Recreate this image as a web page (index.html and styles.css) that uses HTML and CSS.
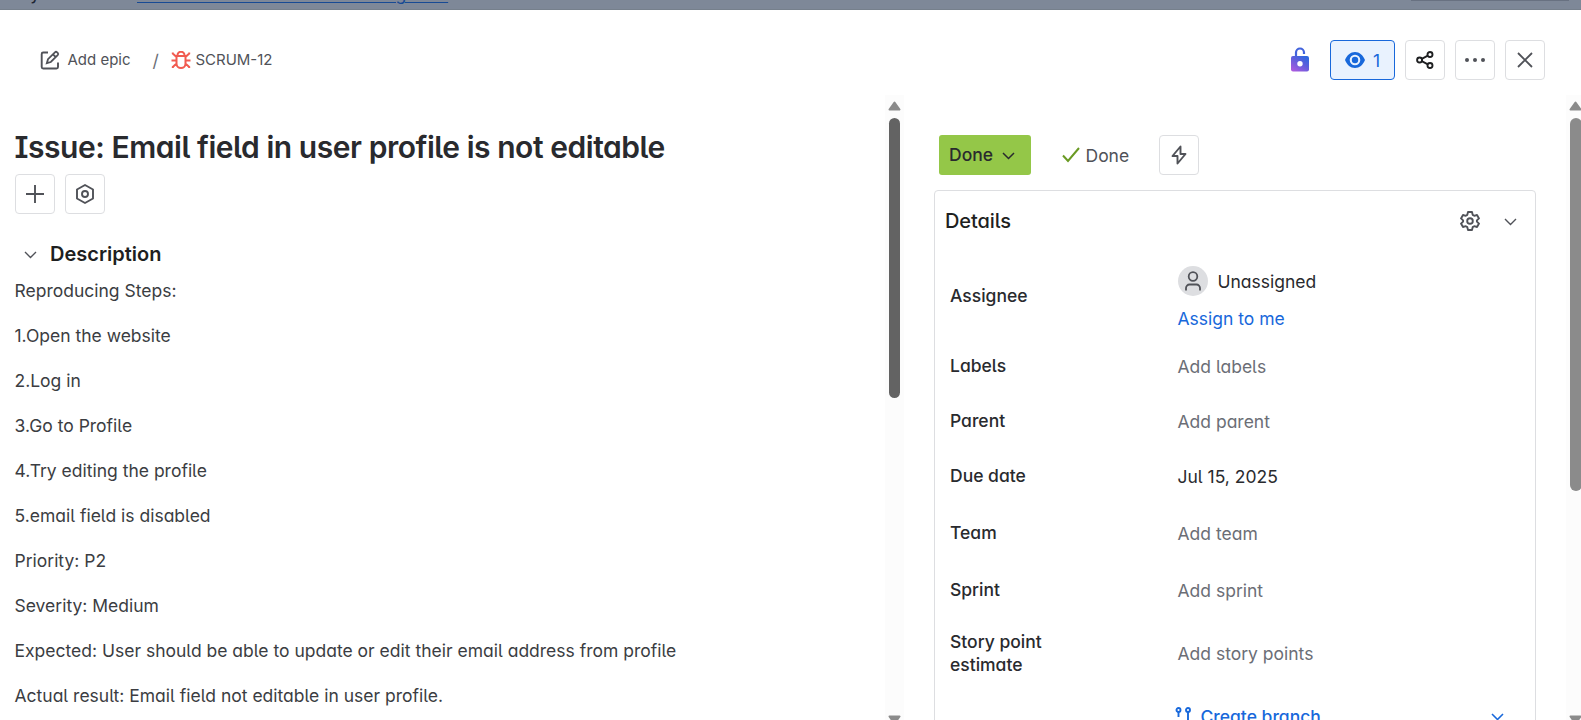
FILE: index.html
```html
<!DOCTYPE html>
<html lang="en">
<head>
<meta charset="utf-8">
<title>SCRUM-12</title>
<link rel="stylesheet" href="styles.css">
</head>
<body>
<div class="backdrop"><span class="behind-text">If you can't see</span><span class="behind-link">switch to the classic issue navigation</span><span class="behind-box"></span></div>
<header class="top">
  <nav class="crumbs">
    <svg class="i-edit" width="20" height="20" viewBox="0 0 20 20" fill="none" stroke="#505258" stroke-width="1.9"><path d="M8 2.500H3.200A1.500 1.500 0 0 0 1.700 4V17A1.500 1.500 0 0 0 3.200 18.500H16.500A1.500 1.500 0 0 0 18 17V12.500"/><path d="M6.800 13.200L8 9.200L14.900 2.300A1.600 1.600 0 0 1 17.100 2.300L17.700 2.900A1.600 1.600 0 0 1 17.700 5.100L10.800 12Z M13 4.300L15.700 7" stroke-width="1.800"/></svg>
    <span class="epic">Add epic</span><span class="slash">/</span>
    <svg class="i-bug" width="20" height="18" viewBox="0 0 20 18" fill="none" stroke="#f15b50" stroke-width="2"><path d="M5.500 5H14.500V12.500A4.500 4.500 0 0 1 5.500 12.500ZM6.500 5V4.200A3.500 3.500 0 0 1 13.500 4.200V5M0.500 9.500H5.500M14.500 9.500H19.500M1.800 1.500V2.500L5.500 6M18.200 1.500V2.500L14.500 6M1.800 17V16L5.600 12.500M18.200 17V16L14.400 12.500"/></svg>
    <span>SCRUM-12</span>
  </nav>
  <div class="actions">
    <svg class="i-lock" width="18" height="25" viewBox="0 0 18 25"><defs><linearGradient id="lk" x1="0" y1="1" x2=".75" y2="0"><stop offset="0" stop-color="#b65ae0"/><stop offset=".65" stop-color="#5b5fdc"/><stop offset="1" stop-color="#2f68df"/></linearGradient></defs><path d="M5 10V5.500A4 4 0 0 1 13 5.500V7" fill="none" stroke="#4263dc" stroke-width="2.200"/><rect y="9" width="18" height="15.500" rx="2" fill="url(#lk)"/><circle cx="9" cy="16.800" r="2.700" fill="#fff"/></svg>
    <button class="btn watch"><svg width="20" height="16" viewBox="0 0 20 16"><path fill="#1868db" fill-rule="evenodd" d="M10 0C14.500 0 18 3 20 8C18 13 14.500 16 10 16S2 13 0 8C2 3 5.500 0 10 0ZM10 2.700A5.300 5.300 0 1 0 10 13.300A5.300 5.300 0 0 0 10 2.700Z"/><circle cx="10" cy="8" r="3.200" fill="#1868db"/></svg><span>1</span></button>
    <button class="btn"><svg width="18" height="18" viewBox="0 0 18 18" fill="none" stroke="#1e1f21" stroke-width="1.900"><circle cx="3.600" cy="9" r="2.500"/><circle cx="14" cy="3.500" r="2.500"/><circle cx="14" cy="14.500" r="2.500"/><path d="M5.800 7.800L11.800 4.700M5.800 10.200L11.800 13.300"/></svg></button>
    <button class="btn"><svg width="22" height="6" viewBox="0 0 22 6" fill="#505258"><circle cx="3" cy="3" r="2"/><circle cx="11" cy="3" r="2"/><circle cx="19" cy="3" r="2"/></svg></button>
    <button class="btn"><svg width="16" height="16" viewBox="0 0 16 16" stroke="#505258" stroke-width="1.800"><path d="M1 1L15 15M15 1L1 15"/></svg></button>
  </div>
</header>
<div class="panes">
  <main class="left">
    <h1>Issue: Email field in user profile is not editable</h1>
    <div class="tools">
      <button class="btn"><svg width="18" height="18" viewBox="0 0 18 18" stroke="#505258" stroke-width="1.900"><path d="M9 0V18M0 9H18"/></svg></button>
      <button class="btn"><svg width="20" height="20" viewBox="0 0 20 20" fill="none" stroke="#505258" stroke-width="1.900" stroke-linejoin="round"><path d="M10 1L18 5.500V14.500L10 19L2 14.500V5.500Z"/><circle cx="10" cy="10" r="3"/></svg></button>
    </div>
    <h2><svg width="13" height="8" viewBox="0 0 13 8" fill="none" stroke="#505258" stroke-width="1.400"><path d="M1 1L6.500 6.500L12 1"/></svg>Description</h2>
    <div class="desc">
      <p>Reproducing Steps:</p>
      <p>1.Open the website</p>
      <p>2.Log in</p>
      <p>3.Go to Profile</p>
      <p>4.Try editing the profile</p>
      <p>5.email field is disabled</p>
      <p>Priority: P2</p>
      <p>Severity: Medium</p>
      <p>Expected: User should be able to update or edit their email address from profile</p>
      <p>Actual result: Email field not editable in user profile.</p>
    </div>
  </main>
  <div class="track">
    <svg class="up" width="13" height="10" viewBox="0 0 13 10"><path d="M6.500 1.500L11.500 8.500H1.500Z" fill="#8b8b8b" stroke="#8b8b8b" stroke-width="2" stroke-linejoin="round"/></svg>
    <div class="thumb dark"></div>
    <svg class="down" width="13" height="10" viewBox="0 0 13 10"><path d="M6.500 8.500L11.500 1.500H1.500Z" fill="#8b8b8b" stroke="#8b8b8b" stroke-width="2" stroke-linejoin="round"/></svg>
  </div>
  <aside class="right">
    <div class="status">
      <button class="done">Done<svg width="13" height="8" viewBox="0 0 13 8" fill="none" stroke="#292a2e" stroke-width="1.500"><path d="M1 1L6.500 6.500L12 1"/></svg></button>
      <span class="resolved"><svg width="18" height="16" viewBox="0 0 18 16" fill="none" stroke="#6a9a23" stroke-width="2"><path d="M1 8.500L6 14L17 1"/></svg>Done</span>
      <button class="btn"><svg width="16" height="20" viewBox="0 0 16 20" fill="none" stroke="#505258" stroke-width="1.900" stroke-linejoin="round"><path d="M9.500 1.500L1.500 11H6.500V18.500L14.500 9H9.500Z"/></svg></button>
    </div>
    <section class="details">
      <div class="details-head"><h3>Details</h3>
        <svg width="20" height="20" viewBox="0 0 20 20" fill="none" stroke="#505258" stroke-width="1.900" stroke-linejoin="round"><path d="M8 1H12L12.700 3.900L14.200 4.800L17 4L19 7.400L16.900 9.400V10.600L19 12.600L17 16L14.200 15.200L12.700 16.100L12 19H8L7.300 16.100L5.800 15.200L3 16L1 12.600L3.100 10.600V9.400L1 7.400L3 4L5.800 4.800L7.300 3.900Z"/><circle cx="10" cy="10" r="2.800"/></svg>
        <svg width="13" height="8" viewBox="0 0 13 8" fill="none" stroke="#505258" stroke-width="1.400"><path d="M1 1L6.500 6.500L12 1"/></svg>
      </div>
      <dl>
        <div class="row assignee"><dt>Assignee</dt><dd><div class="who"><span class="avatar"><svg width="16" height="20" viewBox="0 0 16 20" fill="none" stroke="#505258" stroke-width="1.800"><circle cx="8" cy="5.500" r="4.300"/><path d="M1 19.500V17A3.500 3.500 0 0 1 4.500 13.500H11.500A3.500 3.500 0 0 1 15 17V19.500"/></svg></span><span class="name">Unassigned</span></div><a>Assign to me</a></dd></div>
        <div class="row"><dt>Labels</dt><dd class="empty">Add labels</dd></div>
        <div class="row"><dt>Parent</dt><dd class="empty">Add parent</dd></div>
        <div class="row"><dt>Due date</dt><dd>Jul 15, 2025</dd></div>
        <div class="row team"><dt>Team</dt><dd class="empty">Add team</dd></div>
        <div class="row"><dt>Sprint</dt><dd class="empty">Add sprint</dd></div>
        <div class="row story"><dt>Story point estimate</dt><dd class="empty">Add story points</dd></div>
        <div class="row dev"><dt></dt><dd class="branch"><svg width="16" height="20" viewBox="0 0 16 20" fill="none" stroke="#1868db" stroke-width="1.900"><circle cx="3.500" cy="3" r="2"/><circle cx="13" cy="3" r="2"/><path d="M3.500 5V10M13 5V12.500A3 3 0 0 1 10 15.500H6"/></svg><span>Create branch</span><svg width="13" height="8" viewBox="0 0 13 8" fill="none" stroke="#1868db" stroke-width="1.600"><path d="M1 1L6.500 6.500L12 1"/></svg></dd></div>
      </dl>
    </section>
  </aside>
  <div class="track edge">
    <svg class="up" width="13" height="10" viewBox="0 0 13 10"><path d="M6.500 1.500L11.500 8.500H1.500Z" fill="#8b8b8b" stroke="#8b8b8b" stroke-width="2" stroke-linejoin="round"/></svg>
    <div class="thumb"></div>
    <svg class="down" width="13" height="10" viewBox="0 0 13 10"><path d="M6.500 8.500L11.500 1.500H1.500Z" fill="#8b8b8b" stroke="#8b8b8b" stroke-width="2" stroke-linejoin="round"/></svg>
  </div>
</div>
</body>
</html>
```
FILE: styles.css
```css
* { box-sizing: border-box; }
body {
  margin: 0;
  height: 720px;
  overflow: hidden;
  background: #fff;
  color: #3b3d42;
  font: 17.5px/25px Inter, "Liberation Sans", sans-serif;
  font-feature-settings: "cv11", "cv05", "cv08";
  display: flex;
  flex-direction: column;
}
svg { display: block; flex: none; }
h1, h2, h3, p, dl, dd { margin: 0; }
button { font: inherit; font-feature-settings: inherit; padding: 0; }

.backdrop {
  height: 10px;
  flex: none;
  background: #7e8898;
  border-bottom: 1px solid #76808c;
  overflow: hidden;
  display: flex;
  align-items: flex-end;
  line-height: 20px;
  color: #1e2532;
  white-space: nowrap;
}
.behind-text { width: 137px; padding-left: 12px; margin-bottom: 5px; letter-spacing: -0.3px; }
.behind-link {
  width: 311px;
  text-align: right;
  color: #174a94;
  letter-spacing: 0.05px;
  text-decoration: underline;
  text-underline-offset: 2px;
  text-decoration-thickness: 1px;
  margin-bottom: 5px;
}
.behind-box { margin-left: auto; margin-right: 12px; align-self: flex-start; width: 158px; height: 1px; background: #687181; }

.top {
  height: 85px;
  flex: none;
  display: flex;
  justify-content: space-between;
  align-items: flex-start;
  padding: 30px 36px 0 40px;
}
.crumbs { display: flex; align-items: center; height: 39px; font-size: 15px; color: #505258; }
.i-edit { margin-top: 1px; }
.epic { margin-left: 7.5px; }
.slash { margin: 2px 12.500px 0 22px; color: #6b6e76; font-size: 17.5px; }
.i-bug { margin-right: 4px; }
.actions { display: flex; gap: 10px; align-items: center; }
.i-lock { margin-right: 11px; margin-top: -2px; }
.btn {
  width: 40px;
  height: 40px;
  display: flex;
  align-items: center;
  justify-content: center;
  background: #fff;
  border: 1px solid #dddee1;
  border-radius: 4px;
}
.watch { width: 65px; gap: 8px; background: #e9f2fe; border-color: #1868db; color: #1868db; }

.panes { flex: 1; min-height: 0; display: flex; overflow: hidden; }
.left { width: 885px; padding: 35px 15px 0 14.500px; flex: none; }
h1 { font-size: 30px; line-height: 35px; font-weight: 600; color: #292a2e; letter-spacing: -0.45px; }
.tools { display: flex; gap: 10px; margin: 9px 0 0 0.5px; }
h2 {
  display: flex;
  align-items: center;
  gap: 13px;
  padding-left: 9.5px;
  margin-top: 28px;
  font-size: 20px;
  font-weight: 600;
  color: #1e1f21;
}
.desc { display: flex; flex-direction: column; gap: 15px; margin-top: 9px; line-height: 30px; }

.track {
  width: 19px;
  flex: none;
  background: #fcfcfc;
  display: flex;
  flex-direction: column;
  padding: 6px 0 0 4px;
}
.up { margin-left: -1px; }
.thumb { width: 11px; height: 373px; margin-top: 7px; background: #8b8b8b; border-radius: 6px; flex: none; }
.dark { height: 280px; background: #636363; }
.down { margin: auto 0 -5px -1px; }
.edge { width: 15px; overflow: hidden; }
.edge .thumb { width: 12px; }

.right { flex: 1; padding: 40px 30px 0 30px; }
.status { display: flex; align-items: center; padding-left: 5px; }
.done {
  width: 92px;
  height: 40px;
  display: flex;
  align-items: center;
  gap: 9px;
  padding-left: 10px;
  padding-bottom: 1px;
  border: 0;
  border-radius: 3px;
  background: #94c748;
  color: #292a2e;
  font-weight: 500;
}
.done svg { margin-top: 2px; }
.resolved { display: flex; align-items: center; gap: 5.5px; width: 97px; margin-left: 31px; color: #505258; }
.details { height: 600px; margin-top: 15px; border: 1px solid #dddee1; border-radius: 4px; }
.details-head { height: 60px; margin-bottom: 2px; display: flex; align-items: center; padding: 0 18.5px 0 10px; }
h3 { flex: 1; font-size: 20px; font-weight: 500; color: #1e1f21; letter-spacing: -0.1px; }
.details-head svg:last-child { margin-left: 23.5px; margin-top: 2px; }
.row { display: flex; align-items: center; height: 55px; padding-left: 15px; line-height: 23px; }
dt { width: 130px; margin-right: 97.5px; font-weight: 500; color: #292a2e; flex: none; }
dd { flex: 1; padding-top: 2px; color: #292a2e; }
.assignee { height: 85px; }
.assignee dd { padding-top: 4px; }
.who { display: flex; align-items: center; gap: 10px; margin-bottom: 12px; }
.name { padding-top: 2px; }
.avatar { width: 30px; height: 30px; border-radius: 50%; background: #dddee1; display: flex; align-items: center; justify-content: center; }
.assignee a { display: block; line-height: 22px; color: #1868db; }
dd.empty { color: #6b6e76; }
.team { height: 59px; }
.story { height: 72px; }
.story dd { padding-top: 0; }
dd.branch { display: flex; align-items: center; color: #1868db; font-weight: 500; margin-left: -3px; padding: 0 31px 0 0; }
.branch span { flex: 1; margin-left: 10px; }
```
